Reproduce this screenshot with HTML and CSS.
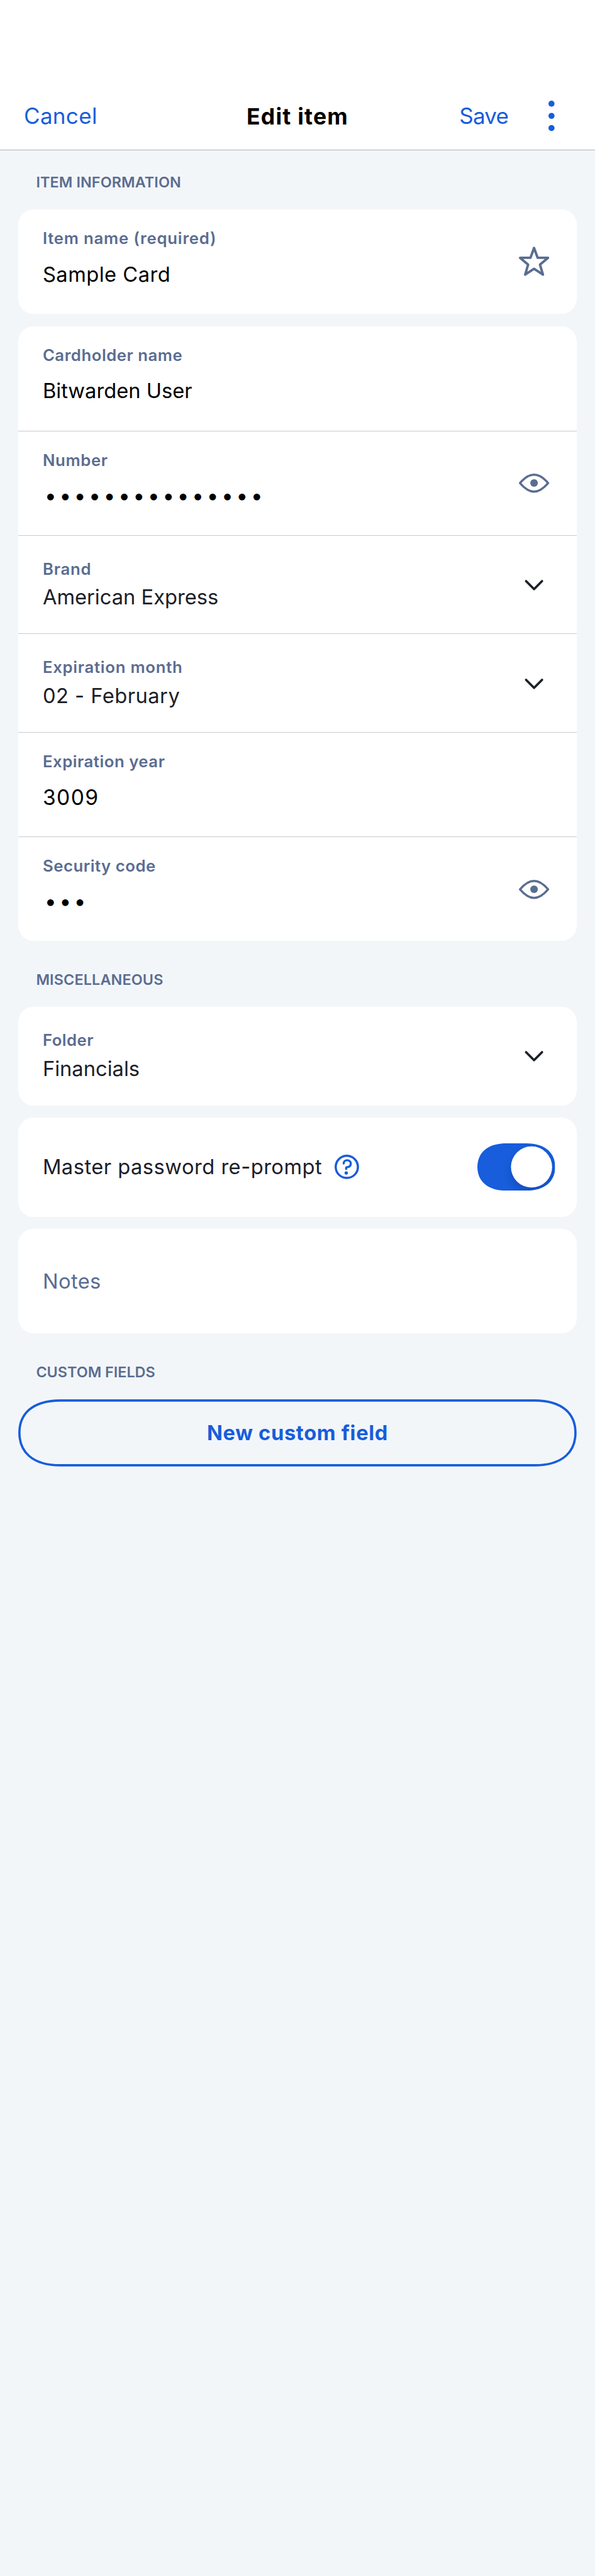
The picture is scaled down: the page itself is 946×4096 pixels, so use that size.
FILE: index.html
```html
<!DOCTYPE html>
<html lang="en">
<head>
<meta charset="utf-8">
<title>Edit item</title>
<link rel="stylesheet" href="styles.css">
</head>
<body>
<svg class="defs" aria-hidden="true">
  <symbol id="eye" viewBox="102 41 216 216">
    <path class="line" stroke-width="13" d="M127 149C150 122 175 99.5 210 99.5S270 122 293 149C270 176 245 199.500 210 199.500S150 176 127 149Z"/>
    <circle cx="210" cy="148.500" r="22.500" fill="currentColor"/>
  </symbol>
  <symbol id="chevron" viewBox="0 0 72 72">
    <path class="line" stroke-width="4.600" d="M20.300 28.400L36 44.200L51.700 28.400"/>
  </symbol>
</svg>
<header class="nav">
  <span class="nav-action cancel">Cancel</span>
  <h1 class="nav-title">Edit item</h1>
  <div class="nav-end">
    <span class="nav-action save">Save</span>
    <svg class="more" viewBox="0 0 12 60"><circle cx="6" cy="6" r="6"/><circle cx="6" cy="30" r="6"/><circle cx="6" cy="54" r="6"/></svg>
  </div>
</header>
<main class="content">
  <h2 class="section section-first t-1">ITEM INFORMATION</h2>
  <section class="card">
    <div class="row">
      <div class="field"><div class="label t-10">Item name (required)</div><div class="value t-6">Sample Card</div></div>
      <svg class="icon" viewBox="102 55.500 216 216"><path class="line" stroke-width="14.500" d="M210 82.500L231 140.500H292.500L245 181L262.500 240L210 205.500L157.500 240L175 181L127.500 140.500H189Z"/></svg>
    </div>
  </section>
  <section class="card">
    <div class="row"><div class="field"><div class="label t-7">Cardholder name</div><div class="value">Bitwarden User</div></div></div>
    <div class="row">
      <div class="field"><div class="label t-8">Number</div><div class="value dots">•••••••••••••••</div></div>
      <svg class="icon"><use href="#eye"/></svg>
    </div>
    <div class="row menu">
      <div class="field"><div class="label t-10">Brand</div><div class="value">American Express</div></div>
      <svg class="icon dark"><use href="#chevron"/></svg>
    </div>
    <div class="row menu">
      <div class="field"><div class="label t-9">Expiration month</div><div class="value t-6">02 - February</div></div>
      <svg class="icon dark"><use href="#chevron"/></svg>
    </div>
    <div class="row"><div class="field"><div class="label t-7">Expiration year</div><div class="value year">3009</div></div></div>
    <div class="row">
      <div class="field"><div class="label t-7">Security code</div><div class="value dots">•••</div></div>
      <svg class="icon"><use href="#eye"/></svg>
    </div>
  </section>
  <h2 class="section t-2">MISCELLANEOUS</h2>
  <section class="card">
    <div class="row menu">
      <div class="field"><div class="label t-6">Folder</div><div class="value">Financials</div></div>
      <svg class="icon dark"><use href="#chevron"/></svg>
    </div>
  </section>
  <section class="card toggle-card">
    <span class="toggle-label t-6">Master password re-prompt</span>
    <svg class="help" viewBox="57 87 144 144">
      <circle class="line" cx="129" cy="159" r="65.500" stroke-width="13"/>
      <path class="line" stroke-width="12.500" d="M110.500 139C110.500 127 119 120 131 120C144 120 152.500 129 152.500 140C152.500 153 144 160 131 161C126 161.500 125 162.500 125 165V171"/>
      <circle cx="125.500" cy="195" r="10" fill="currentColor"/>
    </svg>
    <svg class="switch" viewBox="0 0 153 93">
      <defs>
        <clipPath id="track"><path d="M0 46.500C0 21 17 0 57 0H96C136 0 153 21 153 46.500S136 93 96 93H57C17 93 0 72 0 46.500Z"/></clipPath>
        <filter id="soft" x="-50%" y="-50%" width="200%" height="200%"><feGaussianBlur stdDeviation="8"/></filter>
      </defs>
      <g clip-path="url(#track)">
        <rect width="153" height="93" fill="#175ddc"/>
        <circle cx="106" cy="55" r="39" fill="#0c2f78" opacity=".35" filter="url(#soft)"/>
        <circle cx="106.500" cy="46.500" r="40.500" fill="#fff"/>
      </g>
    </svg>
  </section>
  <section class="card notes"><span class="t-5">Notes</span></section>
  <h2 class="section">CUSTOM FIELDS</h2>
  <button class="button">
    <svg class="outline" viewBox="0 0 1098 132"><path class="line" stroke-width="4.500" d="M2.250 66C2.250 31 25 2.250 83 2.250H1015C1073 2.250 1095.750 31 1095.750 66S1073 129.750 1015 129.750H83C25 129.750 2.250 101 2.250 66Z"/></svg>
    <span class="button-text">New custom field</span>
  </button>
</main>
</body>
</html>
```

FILE: styles.css
```css
/* 1rem spans 100 units of a 1170-unit wide layout */
html { font-size: 80.8547px; background: #f3f6f9; }
* { box-sizing: border-box; }
body { margin: 0; min-height: 4096px; font-family: Inter, "Liberation Sans", sans-serif; font-size: .404rem; color: #000; background: #f3f6f9; }
.defs { position: absolute; width: 0; height: 0; }
.line { fill: none; stroke: currentColor; stroke-linecap: round; stroke-linejoin: round; }

.nav { height: 2.95rem; padding: 1.98rem .795rem .37rem .47rem; border-bottom: 1px solid #b1b3b5; background: #fff; display: grid; grid-template-columns: 1fr auto 1fr; align-items: center; color: #175ddc; font-size: .433rem; line-height: .6rem; }
.nav-title { margin: 0 0 0 .325rem; font-size: .44rem; line-height: .6rem; font-weight: 700; letter-spacing: .015rem; color: #000; position: relative; top: .02rem; }
.cancel { letter-spacing: .004rem; }
.save { letter-spacing: -.0098rem; }
.nav-end { display: flex; justify-content: flex-end; align-items: center; gap: .79rem; }
.more { width: .12rem; height: .6rem; fill: #175ddc; }

.content { padding: 0 .36rem; display: flex; flex-direction: column; }
.section { margin: .565rem 0 .335rem .35rem; font-size: .289rem; line-height: .4rem; font-weight: 600; color: #5a6d91; }
.section-first { margin: .44rem 0 .33rem .35rem; }
.card { background: #fff; border-radius: .3rem; overflow: hidden; }
.card + .card { margin-top: .24rem; }

.row { height: 2.055rem; padding: .374rem .48rem 0; display: flex; justify-content: space-between; position: relative; }
.row + .row { border-top: 1px solid #c9cbce; }
.field { display: flex; flex-direction: column; gap: .249rem; }
.label { font-size: .318rem; line-height: .4rem; font-weight: 600; color: #5a6d91; }
.value { line-height: .5rem; white-space: nowrap; }
.dots { font-size: .42rem; letter-spacing: .0537rem; padding-left: .035rem; margin-top: -.01rem; }
.year { font-size: .415rem; letter-spacing: .018rem; }
.icon { width: .72rem; height: .72rem; margin-top: .29rem; color: #5a6d91; }
.menu { height: 1.935rem; padding-top: .456rem; color: #1b2029; }
.menu .field { gap: .1rem; }
.menu .icon { margin-top: .152rem; color: #1b2029; }

.toggle-card { height: 1.95rem; padding: 0 .42rem .01rem .48rem; display: flex; align-items: center; color: #1b2029; }
.toggle-label { line-height: .5rem; }
.help { width: .48rem; height: .48rem; margin-left: .25rem; color: #175ddc; }
.switch { width: 1.53rem; height: .93rem; margin-left: auto; }
.notes { height: 2.05rem; padding: .772rem .48rem 0; line-height: .5rem; color: #5a6d91; }

.button { height: 1.32rem; padding: 0; border: 0; background: none; display: grid; place-items: center; color: #175ddc; font: 700 .404rem/.5rem Inter, "Liberation Sans", sans-serif; letter-spacing: .0082rem; }
.outline, .button-text { grid-area: 1 / 1; }
.outline { width: 10.98rem; height: 1.32rem; }

/* letter tracking */
.t-1 { letter-spacing: .0014rem; }
.t-2 { letter-spacing: .0018rem; }
.t-5 { letter-spacing: .005rem; }
.t-6 { letter-spacing: .006rem; }
.t-7 { letter-spacing: .0067rem; }
.t-8 { letter-spacing: .0082rem; }
.t-9 { letter-spacing: .0092rem; }
.t-10 { letter-spacing: .0099rem; }
```
